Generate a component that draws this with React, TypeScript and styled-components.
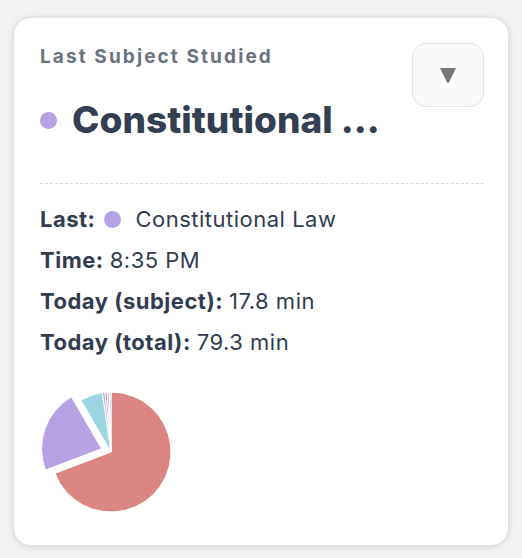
import React, { FC } from 'react';
import styled, { createGlobalStyle } from 'styled-components';

const GlobalStyle = createGlobalStyle`
  html, body {
    margin: 0;
    padding: 0;
    background: #f2f2f2;
  }
  body {
    font-family: Inter, "Noto Sans", "Liberation Sans", sans-serif;
    -webkit-font-smoothing: antialiased;
  }
`;

const SPage = styled.div`
  padding: 17px 13px;
  box-sizing: border-box;
`;

const SCard = styled.div`
  width: 496px;
  height: 529px;
  box-sizing: border-box;
  background: #ffffff;
  border: 1px solid #e2e2e2;
  border-radius: 18px;
  box-shadow: rgba(0, 0, 0, 0.12) 0px 1px 6px 0px;
  padding: 25px 24px 0 26px;
  display: flex;
  flex-direction: column;
`;

const SHeader = styled.div`
  display: flex;
  justify-content: space-between;
  align-items: flex-start;
`;

const STitleBlock = styled.div`
  display: flex;
  flex-direction: column;
`;

const SLabel = styled.div`
  font-size: 19px;
  font-weight: 700;
  letter-spacing: 2.1px;
  color: #6b7280;
  line-height: 24px;
  margin-top: 2px;
`;

const STitleRow = styled.div`
  display: flex;
  align-items: center;
  gap: 15px;
  margin-top: 29px;
`;

const SDot = styled.span<{ size: number; color: string }>(
  ({ size, color }) => `
  display: inline-block;
  flex: none;
  width: ${size}px;
  height: ${size}px;
  border-radius: 50%;
  background: ${color};
`
);

const STitle = styled.div`
  font-size: 37px;
  font-weight: 800;
  color: #353f52;
  line-height: 44px;
  white-space: nowrap;
`;

const SMenuButton = styled.button`
  width: 72px;
  height: 64px;
  border-radius: 14px;
  border: 1px solid #e3e3e3;
  background: #fafafa;
  display: flex;
  justify-content: center;
  align-items: center;
  padding: 0;
  cursor: pointer;
`;

const SDivider = styled.hr`
  border: none;
  border-top: 1px dashed #dcdcdc;
  margin: 41px 0 0 0;
`;

const SDetails = styled.div`
  display: flex;
  flex-direction: column;
  gap: 12px;
  margin-top: 21px;
`;

const SRow = styled.div`
  display: flex;
  align-items: center;
  gap: 6px;
  font-size: 22px;
  letter-spacing: 0.5px;
  line-height: 29px;
  color: #323c50;
`;

const SKey = styled.span`
  font-weight: 700;
`;

const SValue = styled.span<{ indent?: number }>(
  ({ indent }) => `
  font-weight: 400;
  margin-left: ${indent ?? 0}px;
`
);

const SChart = styled.div`
  margin-top: 25px;
`;

type Slice = { value: number; color: string; offset?: number };

const slices: Slice[] = [
  { value: 69.2, color: '#dc8683' },
  { value: 22.4, color: '#b5a1e3', offset: 10 },
  { value: 6.1, color: '#9dd6e3' },
  { value: 0.7, color: '#a6b4ec' },
  { value: 0.6, color: '#dc8683' },
  { value: 0.5, color: '#b5a1e3' },
  { value: 0.5, color: '#9dd6e3' },
];

const polar = (cx: number, cy: number, r: number, deg: number) => {
  const a = (deg * Math.PI) / 180;
  return [cx + r * Math.sin(a), cy - r * Math.cos(a)];
};

const PieChart: FC<{ data: Slice[] }> = ({ data }) => {
  const total = data.reduce((s, d) => s + d.value, 0);
  const cx = 71;
  const cy = 70;
  const r = 60;
  let start = 0;
  return (
    <svg width="140" height="140" viewBox="0 0 140 140">
      {data.map((d, i) => {
        const sweep = (d.value / total) * 360;
        const end = start + sweep;
        const mid = start + sweep / 2;
        const [ox, oy] = polar(0, 0, d.offset ?? 0, mid);
        const [x1, y1] = polar(cx + ox, cy + oy, r, start);
        const [x2, y2] = polar(cx + ox, cy + oy, r, end);
        const large = sweep > 180 ? 1 : 0;
        const path = `M ${cx + ox} ${cy + oy} L ${x1} ${y1} A ${r} ${r} 0 ${large} 1 ${x2} ${y2} Z`;
        start = end;
        return <path key={i} d={path} fill={d.color} stroke="#ffffff" strokeWidth={1} />;
      })}
    </svg>
  );
};

const App: FC = () => {
  return (
    <SPage>
      <GlobalStyle />
      <SCard>
        <SHeader>
          <STitleBlock>
            <SLabel>Last Subject Studied</SLabel>
            <STitleRow>
              <SDot size={17} color="#b5a1e3" />
              <STitle>Constitutional ...</STitle>
            </STitleRow>
          </STitleBlock>
          <SMenuButton aria-label="Choose subject">
            <svg width="18" height="17" viewBox="0 0 18 17">
              <path d="M1 1 H17 L10 15.2 Q9 16.8 8 15.2 Z" fill="#777777" />
            </svg>
          </SMenuButton>
        </SHeader>
        <SDivider />
        <SDetails>
          <SRow>
            <SKey>Last:</SKey>
            <SDot size={17} color="#b5a1e3" style={{ marginLeft: 3 }} />
            <SValue indent={8}>Constitutional Law</SValue>
          </SRow>
          <SRow>
            <SKey>Time:</SKey>
            <SValue>8:35 PM</SValue>
          </SRow>
          <SRow>
            <SKey>Today (subject):</SKey>
            <SValue>17.8 min</SValue>
          </SRow>
          <SRow>
            <SKey>Today (total):</SKey>
            <SValue>79.3 min</SValue>
          </SRow>
        </SDetails>
        <SChart>
          <PieChart data={slices} />
        </SChart>
      </SCard>
    </SPage>
  );
};

export default App;
